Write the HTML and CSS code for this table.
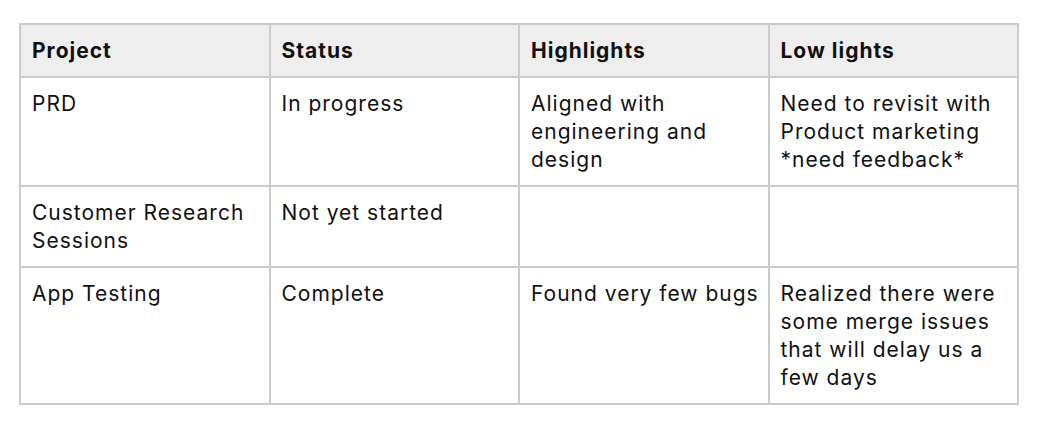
FILE: index.html
```html
<!DOCTYPE html>
<html>
<head>
<meta charset="utf-8">
<link rel="stylesheet" href="styles.css">
</head>
<body>
<table class="status-table">
  <thead>
    <tr>
      <th>Project</th>
      <th>Status</th>
      <th>Highlights</th>
      <th>Low lights</th>
    </tr>
  </thead>
  <tbody>
    <tr>
      <td>PRD</td>
      <td>In progress</td>
      <td>Aligned with engineering and design</td>
      <td>Need to revisit with Product marketing *need feedback*</td>
    </tr>
    <tr>
      <td>Customer Research Sessions</td>
      <td>Not yet started</td>
      <td></td>
      <td></td>
    </tr>
    <tr>
      <td>App Testing</td>
      <td>Complete</td>
      <td>Found very few bugs</td>
      <td>Realized there were some merge issues that will delay us a few days</td>
    </tr>
  </tbody>
</table>
</body>
</html>
```
FILE: styles.css
```css
html, body {
  margin: 0;
  padding: 0;
  background: #ffffff;
}
body {
  padding: 23px 0 0 19px;
  font-family: "Inter", "Liberation Sans", sans-serif;
  color: #111;
}
.status-table {
  border-collapse: collapse;
  width: 1000px;
  table-layout: fixed;
  font-size: 21px;
  line-height: 28px;
  letter-spacing: 1px;
}
.status-table th,
.status-table td {
  border: 2px solid #cccccc;
  padding: 12px 4px 11px 11px;
  text-align: left;
  vertical-align: top;
}
.status-table th {
  background: #eeeeee;
  font-weight: 700;
}
```
